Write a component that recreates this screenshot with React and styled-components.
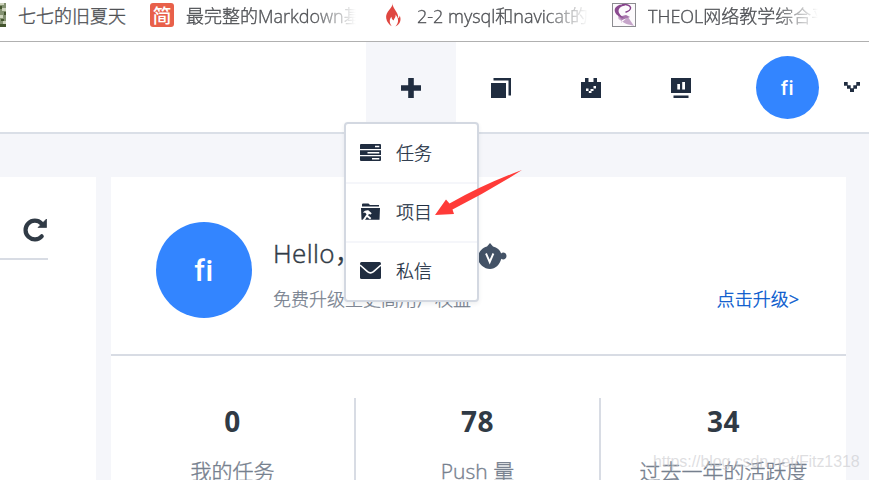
import React from 'react';
import styled, { createGlobalStyle, css } from 'styled-components';

const GlobalStyle = createGlobalStyle`
  * { box-sizing: border-box; }
  body {
    margin: 0;
    overflow: hidden;
    background: #f5f6fa;
    font-family: 'Noto Sans', 'Noto Sans CJK SC', sans-serif;
    color: #202d40;
  }
  svg { display: block; flex: none; }
`;

const Page = styled.div`
  position: relative;
  width: 869px;
  height: 480px;
  overflow: hidden;
`;

const BookmarkBar = styled.div`
  display: flex;
  height: 42px;
  background: #fff;
  border-bottom: 1px solid #b0b0b0;
  overflow: hidden;
`;

const Bookmark = styled.div`
  display: flex;
  flex: none;
  width: ${(p) => p.$width}px;
  padding-top: 3px;
  gap: 12px;
`;

const BookmarkText = styled.span`
  flex: none;
  width: ${(p) => p.$width}px;
  height: 30px;
  margin-top: -1px;
  line-height: 29px;
  overflow: hidden;
  white-space: nowrap;
  font-family: 'Open Sans', 'Noto Sans CJK SC', sans-serif;
  font-size: 18px;
  font-weight: 300;
  color: #505256;
  -webkit-text-stroke: 0.35px #505256;
  ${(p) => p.$fade && css`
    mask-image: linear-gradient(to right, #000 calc(100% - 42px), transparent);
  `}
`;

const JianIcon = styled.span`
  width: 24px;
  height: 24px;
  border-radius: 3px;
  background: #e8604a;
  color: #fff;
  font-family: 'Noto Sans CJK SC', sans-serif;
  font-size: 19px;
  font-weight: 500;
  line-height: 23px;
  text-align: center;
`;

const NavBar = styled.nav`
  display: flex;
  justify-content: flex-end;
  height: 92px;
  background: #fff;
  border-bottom: 2px solid #dadfe7;
`;

const NavItem = styled.div`
  display: flex;
  align-items: center;
  justify-content: center;
  width: 90px;
  height: 90px;
  padding-top: 2px;
  background: ${(p) => (p.$active ? '#f5f6fa' : 'transparent')};
`;

const Account = styled.div`
  display: flex;
  align-items: center;
  gap: 25px;
  width: 143px;
  padding-left: 30px;
`;

const Avatar = styled.div`
  flex: none;
  width: ${(p) => p.$size}px;
  height: ${(p) => p.$size}px;
  border-radius: 50%;
  background: #3385ff;
  color: #fff;
  font-family: Roboto, sans-serif;
  font-weight: 500;
  font-variant-ligatures: none;
  letter-spacing: 0.6px;
  font-size: ${(p) => p.$font}px;
  line-height: ${(p) => p.$size + 1}px;
  text-align: center;
`;

const Content = styled.main`
  display: flex;
  gap: 15px;
  height: 346px;
  padding-top: 43px;
`;

const SideCard = styled.aside`
  width: 96px;
  background: #fff;
`;

const SideHeader = styled.div`
  display: flex;
  justify-content: flex-end;
  width: 48px;
  height: 83px;
  padding: 41px 1px 0 0;
  border-bottom: 2px solid #d8dce4;
`;

const MainCard = styled.section`
  width: 735px;
  background: #fff;
`;

const Profile = styled.div`
  display: flex;
  height: 179px;
  padding: 45px 46px 0 45px;
  border-bottom: 2px solid #d8dce4;
`;

const ProfileText = styled.div`
  flex: 1;
  margin-left: 21px;
`;

const Greeting = styled.div`
  display: flex;
  align-items: center;
  height: 64px;
  font-family: 'Open Sans', 'Noto Sans CJK SC', sans-serif;
  font-size: 26px;
  font-weight: 300;
  letter-spacing: 0.4px;
  color: #303a45;
  -webkit-text-stroke: 0.45px #303a45;

  svg { margin-top: 6px; }
`;

const GreetingName = styled.span`
  width: 204px;
  height: 40px;
  line-height: 38px;
  white-space: nowrap;
`;

const UpgradeRow = styled.div`
  display: flex;
  justify-content: space-between;
  height: 26px;
  line-height: 26px;
  font-size: 18px;
  font-weight: 300;
  color: #76808e;
  -webkit-text-stroke: 0.25px #76808e;
`;

const UpgradeLink = styled.a`
  color: #0055cc;
  margin-right: 1px;
  -webkit-text-stroke: 0.35px #0055cc;
`;

const Stats = styled.div`
  display: flex;
  height: 124px;
  padding-top: 42px;
`;

const Stat = styled.div`
  width: 245px;
  height: 82px;
  text-align: center;
  border-right: ${(p) => (p.$last ? '0' : '2px')} solid #d8dce4;
`;

const StatValue = styled.div`
  height: 46px;
  line-height: 47px;
  font-family: 'Noto Sans', sans-serif;
  font-size: 28px;
  font-weight: 700;
  letter-spacing: 0.6px;
  color: #303a45;
`;

const StatLabel = styled.div`
  height: 50px;
  line-height: 54px;
  font-family: 'Open Sans', 'Noto Sans CJK SC', sans-serif;
  font-size: 21px;
  font-weight: 300;
  color: #76808e;
  -webkit-text-stroke: 0.35px #76808e;
`;

const Menu = styled.div`
  position: absolute;
  left: 344px;
  top: 122px;
  width: 135px;
  height: 180px;
  border: 2px solid #d3d8e1;
  border-radius: 4px;
  background: #fff;
  box-shadow: 0 2px 4px rgba(32, 45, 64, 0.08);
`;

const MenuItem = styled.div`
  display: flex;
  align-items: center;
  gap: 15px;
  height: 59px;
  padding: 0 0 1px 14px;
  font-size: 18px;
  font-weight: 300;
  line-height: 26px;
  -webkit-text-stroke: 0.25px #202d40;

  &:first-child { height: 58px; }
  & + & { border-top: 2px solid #f5f6fa; padding-bottom: 2px; }
`;

const Arrow = styled.svg`
  position: absolute;
  left: 432px;
  top: 166px;
`;

const Watermark = styled.div`
  position: absolute;
  left: 653px;
  top: 452px;
  font-family: 'Liberation Sans', sans-serif;
  font-size: 16px;
  line-height: 20px;
  letter-spacing: -0.08px;
  color: rgba(200, 200, 204, 0.6);
  white-space: nowrap;
`;

const ThumbIcon = () => (
  <svg width="6" height="24" shapeRendering="crispEdges">
    <rect width="6" height="24" fill="#849272" />
    <path d="M0 0h4v2H0zM2 5h4v3H2zM0 12h3v3H0zM3 18h3v3H3z" fill="#cdd3bc" />
    <path d="M0 3h2v3H0zM4 9h2v3H4zM1 16h3v2H1zM0 21h6v3H0z" fill="#44552f" />
  </svg>
);

const FlameIcon = () => (
  <svg width="20" height="24" viewBox="0 0 20 24">
    <path d="M7.600 0C8.200 4.800 0 8.800 1.200 15.200 1.800 19 4.200 21.700 6.800 23.200 4.200 19.800 4.200 16.500 6.400 13.800c.2 2.100 1 3 2.300 3.700.4-2.400 2.400-3.200 1.800-6 3.200 3.700 3.700 8-.1 12 5.300-2.600 6-7 4.300-11-.2 1.500-.5 2.200-1.500 2.700C13.700 8.700 7.300 6.300 7.600 0z" fill="#df4640" />
  </svg>
);

const SwirlIcon = () => (
  <svg width="24" height="24" viewBox="0 0 24 24">
    <rect x=".5" y=".5" width="23" height="23" fill="#fcfafc" stroke="#8c8c90" />
    <path d="M6 12l5 3-2 5 7-6 6 9c-3-1.500-8-1-12.500-5L6.500 16z" fill="#c6a5ca" />
    <path d="M7 14l3 3 8-3-4-2-4 1z" fill="#a775ac" />
    <path d="M12 1.300C6 1.300 1.500 4.500 3 9c1 3 5 5.500 9 6C8 12 5.500 9 7 6c1-2 3-3.300 6-3.600z" fill="#8b4a90" />
    <path d="M10 2c4-1 8 0 8.500 2.300.4 2-2 4.200-5 5" fill="none" stroke="#85408a" strokeWidth="1.500" />
  </svg>
);

const PlusIcon = () => (
  <svg width="20" height="20"><path d="M7.200 0h5.600v7.200H20v5.600h-7.200V20H7.200v-7.200H0V7.200h7.200z" fill="#202d40" /></svg>
);

const CopyIcon = () => (
  <svg width="20" height="20"><path d="M0 5h15v15H0zM2.500 0H20v17.500h-2.500v-15h-15z" fill="#202d40" /></svg>
);

const CalendarIcon = () => (
  <svg width="20" height="20">
    <path d="M0 4h4V0h3.500v4h5V0H16v4h4v16H0z" fill="#202d40" />
    <path d="M5 10.500h2.500V13h2v-2h3V8H15v2.500h-2.500V13h-2v2H7.800v-2H5z" fill="#fff" />
  </svg>
);

const BoardIcon = () => (
  <svg width="20" height="20">
    <path d="M0 0h20v15H0zM2.500 17.500h15V20h-15z" fill="#202d40" />
    <path d="M6.300 6H9v5.500H6.300zM11.200 4H14v7.500h-2.800z" fill="#fff" />
  </svg>
);

const ChevronIcon = () => (
  <svg width="16" height="10"><path d="M0 0h3.700v3.200H6.700v3h2.600v-3h3V0H16v3.700h-3v3h-3V10H6V6.700H3v-3H0z" fill="#202d40" /></svg>
);

const RefreshIcon = () => (
  <svg width="24" height="24" viewBox="0 0 24 24">
    <path d="M18.700 18.300A9.300 9.300 0 1 1 18.500 5.500" fill="none" stroke="#303a45" strokeWidth="4.200" strokeLinecap="round" />
    <path d="M23.500 1v8.500H15z" fill="#303a45" stroke="#303a45" strokeWidth=".7" />
  </svg>
);

const TaskIcon = () => (
  <svg width="21" height="17">
    <path d="M1 0h19q1 0 1 1v4H0V1q0-1 1-1zM0 6.200h21V11H0zM0 12.300h21V16q0 1-1 1H1q-1 0-1-1z" fill="#202d40" />
    <path d="M15 1.700h4.300v1.500H15zM7.500 7.900h11.800v1.500H7.500zM12 14h7.300v1.500H12z" fill="#fff" />
  </svg>
);

const ProjectIcon = () => (
  <svg width="21" height="17" viewBox="0 0 21 17">
    <path d="M2 3.500V1.500q0-1 1-1h5.500L10 2h9v1.500zM1 5h19l-.5 11.700H1.500z" fill="#202d40" />
    <path d="M2.800 9.500Q5 7 8.300 7.300l3.400 3-1 1.300-1.700-.7-1 1.300 3.300 2.700-1.200 1.700-3.200-2.700-1.900 3.100H2.600l4-5.700-1.300-1.500z" fill="#fff" />
  </svg>
);

const MailIcon = () => (
  <svg width="21" height="17" viewBox="0 0 21 17">
    <rect width="21" height="17" rx="1.500" fill="#202d40" />
    <path d="M0 3l7.500 6.700q3 2.500 6 0L21 3" fill="none" stroke="#fff" strokeWidth="1.600" />
  </svg>
);

const VipIcon = () => (
  <svg width="30" height="28" viewBox="0 0 30 28">
    <path d="M10 3.500L13 0l3 3.500c4 1 7 3.500 8.200 7 1.500-1.800 5.300-.8 5.300 2.500s-3.500 4.200-5.200 2.800C22.500 22 18.500 26 13 26S1 21 1 15 5 5 10 3.500z" fill="#435266" />
    <path d="M9 10.500l3.700 8.500 3.700-8.500" fill="none" stroke="#fff" strokeWidth="1.900" />
  </svg>
);

const navIcons = [CopyIcon, CalendarIcon, BoardIcon];
const menuItems = [
  { label: '任务', Icon: TaskIcon },
  { label: '项目', Icon: ProjectIcon },
  { label: '私信', Icon: MailIcon },
];
const stats = [
  { value: '0', label: '我的任务' },
  { value: '78', label: 'Push 量' },
  { value: '34', label: '过去一年的活跃度' },
];

export default function App() {
  return (
    <Page>
      <GlobalStyle />
      <BookmarkBar>
        <Bookmark $width={150}><ThumbIcon /><BookmarkText $width={110}>七七的旧夏天</BookmarkText></Bookmark>
        <Bookmark $width={235}><JianIcon>简</JianIcon><BookmarkText $width={170} $fade>最完整的Markdown基础</BookmarkText></Bookmark>
        <Bookmark $width={227}><FlameIcon /><BookmarkText $width={171} $fade>2-2 mysql和navicat的</BookmarkText></Bookmark>
        <Bookmark $width={257}><SwirlIcon /><BookmarkText $width={170} $fade>THEOL网络教学综合平台</BookmarkText></Bookmark>
      </BookmarkBar>
      <NavBar>
        <NavItem $active><PlusIcon /></NavItem>
        {navIcons.map((Icon, i) => <NavItem key={i}><Icon /></NavItem>)}
        <Account><Avatar $size={63} $font={20}>fi</Avatar><ChevronIcon /></Account>
      </NavBar>
      <Content>
        <SideCard><SideHeader><RefreshIcon /></SideHeader></SideCard>
        <MainCard>
          <Profile>
            <Avatar $size={96} $font={30}>fi</Avatar>
            <ProfileText>
              <Greeting><GreetingName>Hello，</GreetingName><VipIcon /></Greeting>
              <UpgradeRow><span>免费升级至更高用户权益</span><UpgradeLink>点击升级&gt;</UpgradeLink></UpgradeRow>
            </ProfileText>
          </Profile>
          <Stats>
            {stats.map((s, i) => (
              <Stat key={s.label} $last={i === 2}>
                <StatValue>{s.value}</StatValue>
                <StatLabel>{s.label}</StatLabel>
              </Stat>
            ))}
          </Stats>
        </MainCard>
      </Content>
      <Menu>
        {menuItems.map(({ label, Icon }) => <MenuItem key={label}><Icon />{label}</MenuItem>)}
      </Menu>
      <Arrow width="92" height="51" viewBox="0 0 92 51">
        <path d="M90 4Q55 26 20.500 43.500L22 48 3 49 14 33.500l3.500 4Q52 18 90 4z" fill="#ff3b38" />
      </Arrow>
      <Watermark>https://blog.csdn.net/Fitz1318</Watermark>
    </Page>
  );
}
